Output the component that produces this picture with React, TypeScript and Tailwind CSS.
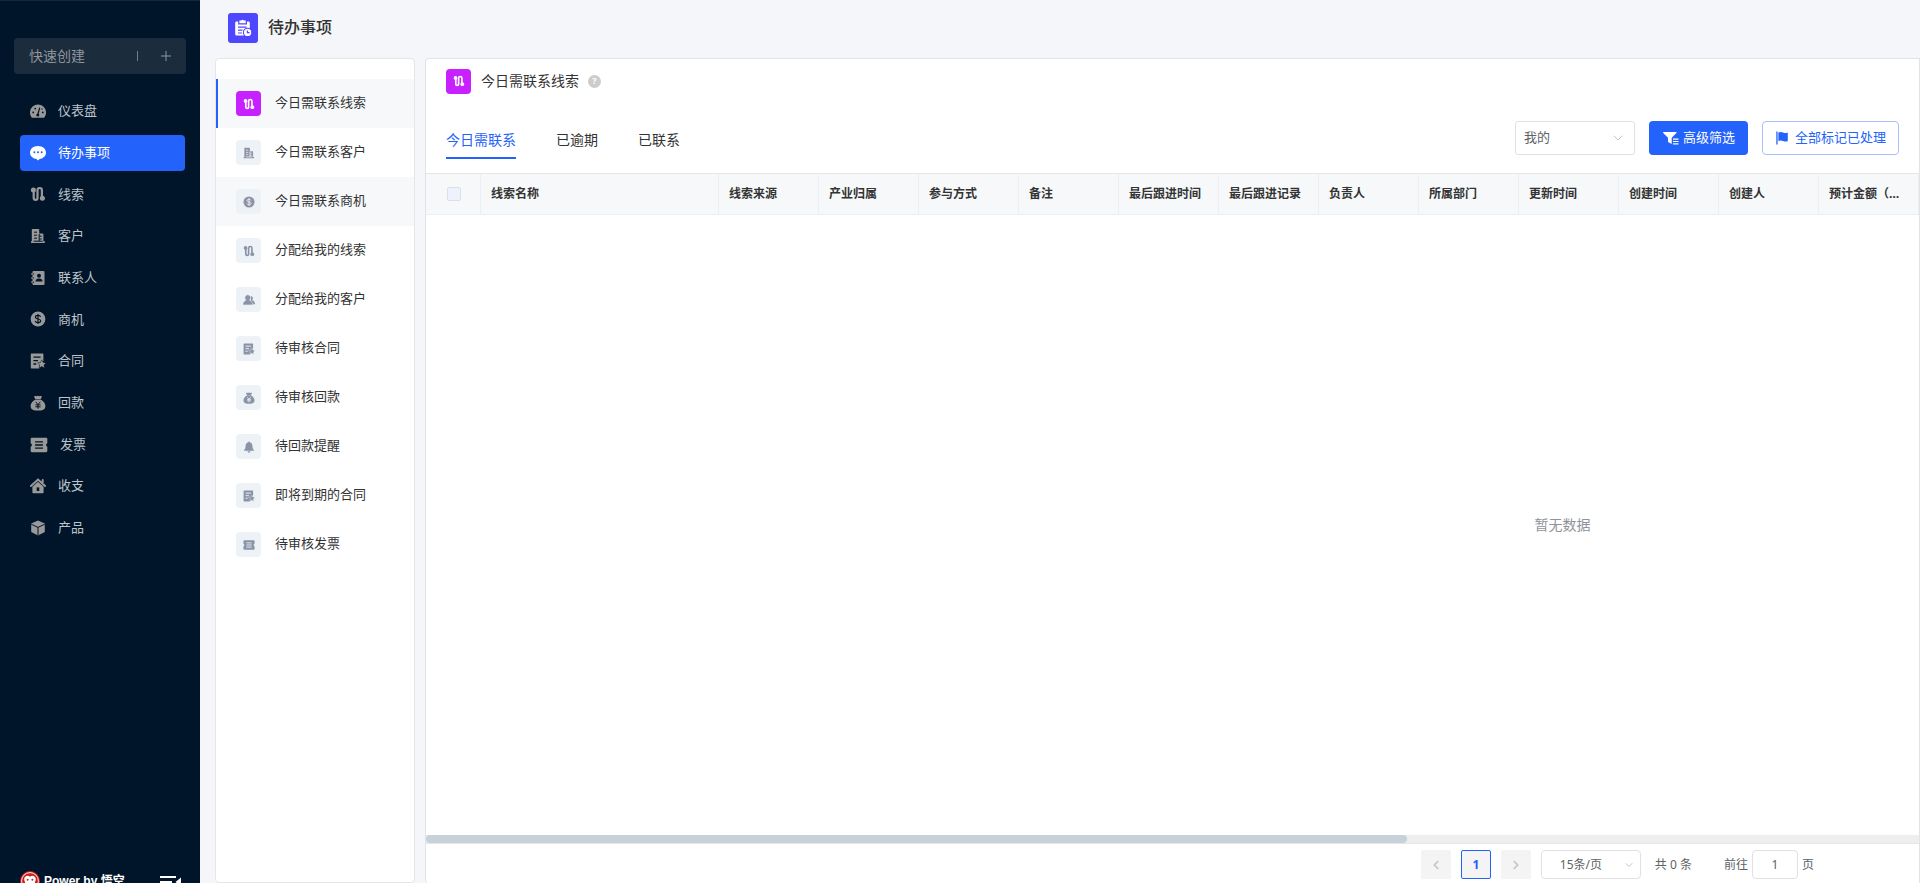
import { useState, type ReactNode } from "react";
import { ChevronDown, ChevronLeft, ChevronRight, Plus } from "lucide-react";
import clsx from "clsx";

type IconName =
  | "dashboard" | "chat" | "clue" | "building" | "contacts" | "coin" | "contract"
  | "moneybag" | "ticket" | "house" | "box" | "people" | "bell";

// Solid 16x16 glyphs. `hole` is the colour of the surface behind the icon.
const glyphs: Record<IconName, (hole: string) => ReactNode> = {
  dashboard: (hole) => (
    <>
      <path d="M1.500 14.200A8 8 0 1 1 14.500 14.200Q14.200 14.800 13.400 14.800H2.600Q1.800 14.800 1.500 14.200Z" />
      <path d="M9.600 5.200 8 11" stroke={hole} strokeWidth="1.200" strokeLinecap="round" />
      <g fill={hole}>
        <circle cx="7.800" cy="11.900" r="1.500" />
        <circle cx="5.200" cy="5.600" r=".9" />
        <circle cx="3.200" cy="9.400" r=".9" />
        <circle cx="12.800" cy="9.400" r=".9" />
        <circle cx="12" cy="6" r=".7" />
      </g>
    </>
  ),
  chat: (hole) => (
    <>
      <path d="M8 .9c4.500 0 8 2.800 8 6.500 0 3.400-2.700 6-6.100 6.400L8 15.600l-1.900-1.800C2.700 13.400 0 10.800 0 7.400 0 3.700 3.500.9 8 .9Z" />
      <g fill={hole}>
        <circle cx="4.300" cy="7.300" r="1" />
        <circle cx="8" cy="7.300" r="1" />
        <circle cx="11.700" cy="7.300" r="1" />
      </g>
    </>
  ),
  clue: () => (
    <>
      <path
        d="M3.700 4v8a1.900 1.900 0 0 0 3.800 0V4.200a2.200 2.200 0 0 1 4.400 0V12"
        fill="none"
        stroke="currentColor"
        strokeWidth="2.200"
      />
      <circle cx="3.400" cy="3.900" r="2.500" />
      <circle cx="12.400" cy="12.300" r="2.500" />
    </>
  ),
  building: (hole) => (
    <>
      <path d="M1.800 1.600Q1.800 1 2.400 1h6.200q.6 0 .6.600v4h3.600q.6 0 .6.600v7h1.400V15H1v-1.800h.8Z" />
      <path
        d="M4 4.200h3M4 7.200h3M4 10.200h3M9.500 8.200h2.200M9.500 11h2.200M9.200 6v7.200M3.600 13.200h9"
        stroke={hole}
        strokeWidth="1"
      />
    </>
  ),
  contacts: (hole) => (
    <>
      <path d="M3.500 1h10q1 0 1 1v12q0 1-1 1h-10q-1 0-1-1v-1H1.400v-1.800h1.100V9H1.400V7.200h1.100V4.800H1.400V3h1.100V2q0-1 1-1Z" />
      <g fill={hole}>
        <circle cx="9" cy="5.800" r="2" />
        <path d="M5.500 11.600q0-3 3.500-3t3.500 3Z" />
        <path d="M2.600 3.400h1.500v1H2.600zM2.600 7.600h1.500v1H2.600zM2.600 11.700h1.500v1H2.600z" />
      </g>
    </>
  ),
  coin: (hole) => (
    <>
      <circle cx="8" cy="8" r="7.400" />
      <path
        d="M10.600 5.900C10.300 4.900 9.300 4.400 8 4.400c-1.500 0-2.600.6-2.600 1.800 0 2.600 5.300 1 5.300 3.600 0 1.200-1.100 1.900-2.700 1.900-1.400 0-2.500-.6-2.800-1.700M8 3v10"
        fill="none"
        stroke={hole}
        strokeWidth="1.200"
      />
    </>
  ),
  contract: (hole) => (
    <>
      <path d="M.8 1.200Q.8.600 1.400.600h11.400q.6 0 .6.600V8l-4 2v5.400H1.400Q.8 15.400.8 14.800Z" />
      <path d="M3.400 4.200h7.200M3.400 7.600h4.600M3.400 11h2.800" stroke={hole} strokeWidth="1.300" />
      <path
        d="m11.800 6.800 1.400 2.600 2.800.5-2 2.100.4 2.900-2.600-1.300-2.600 1.300.4-2.900-2-2.100 2.800-.5Z"
        stroke={hole}
        strokeWidth=".5"
      />
    </>
  ),
  moneybag: (hole) => (
    <>
      <path d="M5 .8 6.500 1.300 8 .7l1.500.6L11 .8l.9.900L10.700 4.200H5.300L4.100 1.700ZM5 4.800h6c2.600 1.500 4.400 4 4.400 6.300C15.400 14 13.400 15.500 10.900 15.500H5.100C2.600 15.500.6 14 .6 11.100.6 8.800 2.400 6.300 5 4.800Z" />
      <path
        d="m5.600 6.800 2.400 2.700 2.400-2.700M5.400 9.900h5.200M5.400 11.800h5.200M8 9.500v4.200"
        fill="none"
        stroke={hole}
        strokeWidth="1"
      />
    </>
  ),
  ticket: (hole) => (
    <>
      <path d="M1.600 1.600h12.800q1 0 1 1v3.800a1.700 1.700 0 0 0 0 3.200v3.800q0 1-1 1H1.600q-1 0-1-1V9.600a1.700 1.700 0 0 0 0-3.200V2.600q0-1 1-1Z" />
      <path d="M4.500 5.200h7M4.500 8h7M4.500 10.800h7" stroke={hole} strokeWidth="1.200" />
    </>
  ),
  house: (hole) => (
    <>
      <path
        d="M.9 8 8 1.600 15.100 8M12.700 2v3"
        fill="none"
        stroke="currentColor"
        strokeWidth="1.900"
        strokeLinecap="round"
      />
      <path d="m8 3.800 5.600 5V14.600q0 .6-.6.6H3q-.6 0-.6-.6V8.800Z" />
      <path d="M6.700 9.400h2.600v3.600H6.700z" fill={hole} />
    </>
  ),
  box: (hole) => (
    <>
      <path d="M8 .600 14.800 3.600V12L8 15.500 1.200 12V3.600Z" />
      <path d="M1.200 4.200 8 7.400l6.800-3.200M8 7.400v8.200" fill="none" stroke={hole} strokeWidth="1" />
    </>
  ),
  people: (hole) => (
    <>
      <path d="M10 2.500a3.200 3.200 0 0 1 2 5.700q4 1 4 5.300h-5Z" />
      <path
        d="M6.300 1a3.900 3.900 0 0 1 2.400 6.900c.2 1.200 4.300 1.500 4.300 6.600H-.2C-.2 9.400 3.800 9.100 3.900 7.900A3.900 3.900 0 0 1 6.300 1Z"
        stroke={hole}
        strokeWidth=".7"
      />
    </>
  ),
  bell: () => (
    <path d="M8 .5q1 0 1 1.200c2.200.6 3.600 2.500 3.600 5 0 3.300.7 4.200 1.900 5.300v1h-13v-1c1.200-1.100 1.900-2 1.900-5.300 0-2.500 1.400-4.400 3.600-5Q7 .5 8 .5ZM6 13.800h4q-.4 1.700-2 1.700t-2-1.700Z" />
  ),
};

const Icon = ({ name, hole, className }: { name: IconName; hole: string; className?: string }) => (
  <svg viewBox="0 0 16 16" fill="currentColor" className={clsx("shrink-0", className)} aria-hidden="true">
    {glyphs[name](hole)}
  </svg>
);

const navItems: { label: string; icon: IconName }[] = [
  { label: "仪表盘", icon: "dashboard" },
  { label: "待办事项", icon: "chat" },
  { label: "线索", icon: "clue" },
  { label: "客户", icon: "building" },
  { label: "联系人", icon: "contacts" },
  { label: "商机", icon: "coin" },
  { label: "合同", icon: "contract" },
  { label: "回款", icon: "moneybag" },
  { label: "发票", icon: "ticket" },
  { label: "收支", icon: "house" },
  { label: "产品", icon: "box" },
];

const todoItems: { label: string; icon: IconName }[] = [
  { label: "今日需联系线索", icon: "clue" },
  { label: "今日需联系客户", icon: "building" },
  { label: "今日需联系商机", icon: "coin" },
  { label: "分配给我的线索", icon: "clue" },
  { label: "分配给我的客户", icon: "people" },
  { label: "待审核合同", icon: "contract" },
  { label: "待审核回款", icon: "moneybag" },
  { label: "待回款提醒", icon: "bell" },
  { label: "即将到期的合同", icon: "contract" },
  { label: "待审核发票", icon: "ticket" },
];

const tabs = ["今日需联系", "已逾期", "已联系"];

const columns = [
  "线索来源", "产业归属", "参与方式", "备注", "最后跟进时间", "最后跟进记录",
  "负责人", "所属部门", "更新时间", "创建时间", "创建人", "预计金额（元）",
];

const Sidebar = () => (
  <aside className="flex w-[200px] shrink-0 flex-col border-t border-[#12283a] bg-[#001529]">
    {/* Quick create */}
    <button className="mx-[14px] mt-[37px] flex h-9 shrink-0 cursor-pointer items-center rounded bg-[#1b2c3d] pr-3 pl-[15px] text-sm text-[#8f959b]">
      快速创建
      <span className="ml-auto h-[10px] w-px bg-[#737f8a]" />
      <Plus className="ml-5 size-4" strokeWidth={1.5} />
    </button>

    <nav className="mt-[19px] mr-[15px] ml-5 flex h-[453px] shrink-0 flex-col justify-between">
      {navItems.map(({ label, icon }) => {
        const active = label === "待办事项";
        return (
          <a
            key={label}
            href="#"
            className={clsx(
              "flex h-9 items-center rounded pl-[10px] text-[13px]",
              active ? "bg-[#2362fb] text-white" : "text-[#bec4ca]",
            )}
          >
            <Icon
              name={icon}
              hole={active ? "#2362fb" : "#001529"}
              className={clsx(
                "mr-3",
                icon === "ticket" ? "size-[18px]" : "size-4",
                active ? "text-white" : "text-[#999999]",
              )}
            />
            {label}
          </a>
        );
      })}
    </nav>

    {/* Branding, runs off the bottom edge */}
    <div className="mt-auto -mb-2 flex h-5 shrink-0 items-center pr-[18px] pl-5 text-xs font-bold text-white">
      <svg viewBox="0 0 20 20" className="mr-1 size-5" aria-hidden="true">
        <circle cx="10" cy="10" r="10" fill="#c9211e" />
        <circle cx="10" cy="10" r="8.400" fill="none" stroke="#fff" strokeWidth=".9" />
        <path d="M10 5.800C8 3.800 4.200 5 4.200 8.300c0 1.800 1 2.600 1 4 0 2.300 2.500 3.500 4.800 3.500s4.800-1.200 4.800-3.500c0-1.400 1-2.200 1-4 0-3.300-3.800-4.500-5.800-2.500Z" fill="#fff" />
        <circle cx="7.600" cy="8.800" r="1" fill="#c9211e" />
        <circle cx="12.400" cy="8.800" r="1" fill="#c9211e" />
        <path d="M8 13h4" stroke="#c9211e" strokeWidth="1" />
      </svg>
      <span className="font-['Liberation_Sans','Noto_Sans_CJK_SC',sans-serif]">Power by 悟空</span>
      <button className="ml-auto" aria-label="收起">
        <svg viewBox="0 0 22 16" className="h-4 w-[22px]" fill="currentColor">
          <path d="M0 3h16v2H0zM0 8h12v2H0zM0 13h16v2H0zM21 4.500v9L15.500 9Z" />
        </svg>
      </button>
    </div>
  </aside>
);

const TodoList = () => (
  <ul className="w-[200px] shrink-0 rounded border border-[#e6e6e6] bg-white pt-5">
    {todoItems.map(({ label, icon }, i) => {
      const active = i === 0;
      return (
        <li key={label}>
          <a
            href="#"
            className={clsx(
              "flex h-[49px] items-center border-l-2 pl-[18px] text-[13px] text-[#333333]",
              active ? "border-[#2362fb] bg-[#f6f8fa]" : i === 2 ? "border-[#f6f8fa] bg-[#f6f8fa]" : "border-white",
            )}
          >
            <span
              className={clsx(
                "mr-[14px] flex size-[25px] items-center justify-center rounded",
                active ? "bg-[#c721ff] text-white" : "bg-[#edf2f6] text-[#8a94a6]",
              )}
            >
              <Icon name={icon} hole={active ? "#c721ff" : "#edf2f6"} className="size-3" />
            </span>
            <span className="pb-[2px]">{label}</span>
          </a>
        </li>
      );
    })}
  </ul>
);

const LeadTable = () => (
  <div className="flex min-h-0 flex-1 flex-col">
    <div className="flex-1 overflow-hidden">
      <table className="h-full w-[2273px] table-fixed border-separate border-spacing-0 text-xs">
        <thead>
          <tr className="h-[42px] bg-[#f6f8fa] text-left text-[#333333]">
            <th className="w-[55px] border-y border-r border-t-[#e6e6e6] border-r-[#ebeef5] border-b-[#ebeef5] pl-[21px] align-middle">
              <input
                type="checkbox"
                disabled
                aria-label="全选"
                className="block size-[14px] appearance-none rounded-[2px] border border-[#dcdfe6] bg-[#edf2fc]"
              />
            </th>
            <th className="w-[238px] border-y border-r border-t-[#e6e6e6] border-r-[#ebeef5] border-b-[#ebeef5] px-[10px]">
              线索名称
            </th>
            {columns.map((name) => (
              <th
                key={name}
                className="w-[100px] truncate border-y border-r border-t-[#e6e6e6] border-r-[#ebeef5] border-b-[#ebeef5] px-[10px]"
              >
                {name}
              </th>
            ))}
            <th className="border-y border-t-[#e6e6e6] border-b-[#ebeef5]" />
          </tr>
        </thead>
        <tbody>
          <tr>
            <td colSpan={columns.length + 3} className="text-center text-sm text-[#909399]">
              暂无数据
            </td>
          </tr>
        </tbody>
      </table>
    </div>
    {/* Horizontal scrollbar */}
    <div className="h-[9px] border-b border-[#e6e6e6] bg-[#eeeeee]">
      <div className="h-full w-[65.7%] rounded-full bg-[#c6d1d9]" />
    </div>
  </div>
);

const Pagination = () => (
  <footer className="flex h-[39px] shrink-0 items-center justify-end pt-[2px] pr-[105px] text-xs text-[#606266]">
    <button disabled aria-label="上一页" className="flex h-[29px] w-[30px] items-center justify-center rounded-[2px] bg-[#f4f4f5] text-[#c0c4cc]">
      <ChevronLeft className="size-[14px]" strokeWidth={3} />
    </button>
    <button className="ml-[10px] h-[29px] w-[30px] rounded-[2px] border border-[#2362fb] bg-[#f4f4f5] font-bold text-[#2362fb]">
      1
    </button>
    <button disabled aria-label="下一页" className="ml-[10px] flex h-[29px] w-[30px] items-center justify-center rounded-[2px] bg-[#f4f4f5] text-[#c0c4cc]">
      <ChevronRight className="size-[14px]" strokeWidth={3} />
    </button>
    <div className="relative ml-[10px]">
      <select aria-label="每页条数" className="block h-[29px] w-[100px] appearance-none rounded border border-[#e1e1e1] bg-white pl-[18px]">
        <option>15条/页</option>
      </select>
      <ChevronDown className="pointer-events-none absolute top-[9px] right-[6px] size-3 text-[#c0c4cc]" />
    </div>
    <span className="ml-[14px]">共 0 条</span>
    <label className="ml-8 flex items-center gap-1">
      前往
      <input type="text" defaultValue="1" className="h-[29px] w-[46px] rounded border border-[#e1e1e1] text-center" />
      页
    </label>
  </footer>
);

const App = () => {
  const [tab, setTab] = useState(tabs[0]);

  return (
    <div className="flex h-screen overflow-hidden bg-[#f5f6f9] font-['Noto_Sans','Noto_Sans_CJK_SC',sans-serif]">
      <Sidebar />

      <div className="flex min-w-0 flex-1 flex-col">
        {/* Page title */}
        <header className="flex h-[58px] shrink-0 items-center pb-[2px] pl-7">
          <span className="flex size-[30px] items-center justify-center rounded-[3px] bg-[#4f46ff] text-white">
            <svg viewBox="0 0 18 18" className="size-[18px]" fill="currentColor" aria-hidden="true">
              <path d="M2.500 2.600H4.200V5.500H13V2.600h1.500q1.300 0 1.300 1.300V10H11l-1.500 3 .8 3.600H2.500q-1.300 0-1.300-1.300V3.900Q1.200 2.600 2.500 2.600Z" />
              <path d="M5.400 1.500h1.800Q8.600 0 10 1.500h1.800v2.800H5.400Z" />
              <path d="M4 8.200h8.500M4 11.200h4.500M4 14h4" stroke="#4f46ff" strokeWidth="1.200" />
              <circle cx="13.600" cy="13.400" r="4.200" stroke="#4f46ff" strokeWidth="1.100" />
              <path d="M13.400 11.400v2.200h2.200" fill="none" stroke="#4f46ff" strokeWidth="1.200" />
            </svg>
          </span>
          <h1 className="ml-[10px] pb-[2px] text-base font-medium text-[#333333]">待办事项</h1>
        </header>

        <main className="flex min-h-0 flex-1 gap-[10px] pl-[15px]">
          <TodoList />

          <section className="flex min-w-0 flex-1 flex-col rounded-l border border-b-0 border-[#e1e3e6] bg-white">
            <div className="flex h-[46px] shrink-0 items-center pb-[2px] pl-5 text-sm text-[#333333]">
              <span className="flex size-[25px] items-center justify-center rounded bg-[#c721ff] text-white">
                <Icon name="clue" hole="#c721ff" className="size-3" />
              </span>
              <h2 className="ml-[10px]">今日需联系线索</h2>
              <span className="ml-[9px] flex size-[13px] items-center justify-center rounded-full bg-[#cccccc] text-[9px] font-bold text-white">
                ?
              </span>
            </div>

            {/* Tabs and actions */}
            <div className="flex h-[68px] shrink-0 items-center pr-5 pb-[2px] pl-5 text-[13px]">
              <div className="mt-[6px] flex gap-10 text-sm">
                {tabs.map((name) => (
                  <button
                    key={name}
                    onClick={() => setTab(name)}
                    className={clsx(
                      "h-9 cursor-pointer border-b-2",
                      tab === name ? "border-[#2362fb] text-[#2362fb]" : "border-transparent text-[#333333]",
                    )}
                  >
                    {name}
                  </button>
                ))}
              </div>

              <div className="relative ml-auto">
                <select aria-label="范围" className="block h-[34px] w-[120px] appearance-none rounded-[3px] border border-[#e1e1e1] bg-white pl-2 text-[#606266]">
                  <option>我的</option>
                </select>
                <ChevronDown className="pointer-events-none absolute top-[9px] right-[9px] size-4 text-[#c0c4cc]" strokeWidth={1.5} />
              </div>
              <button className="ml-[14px] flex h-[34px] cursor-pointer items-center rounded bg-[#2362fb] pr-[13px] pl-[14px] text-white">
                <svg viewBox="0 0 16 14" className="mr-1 h-[14px] w-4" fill="currentColor" aria-hidden="true">
                  <path d="M.500 1h12.600q.8.300.3 1L8.700 6.800V13L5 11V6.800L.2 2Q-.2 1.300.500 1ZM10 7.600h5.500v1.200H10ZM10 9.900h5.500v1.200H10ZM10 12.200h5.500v1.200H10Z" />
                </svg>
                高级筛选
              </button>
              <button className="ml-[14px] flex h-[34px] cursor-pointer items-center rounded border border-[#a7c0fd] bg-white px-3 text-[#2362fb]">
                <svg viewBox="0 0 14 14" className="mr-[6px] size-[14px]" fill="currentColor" aria-hidden="true">
                  <path d="M1.300.500h1.300V13.500H1.300ZM3.400 1.400q2.400-1 4.700 0t4.700 0V10q-2.300 1-4.700 0T3.400 10Z" />
                </svg>
                全部标记已处理
              </button>
            </div>

            <LeadTable />
            <Pagination />
          </section>
        </main>
      </div>
    </div>
  );
};

export default App;
